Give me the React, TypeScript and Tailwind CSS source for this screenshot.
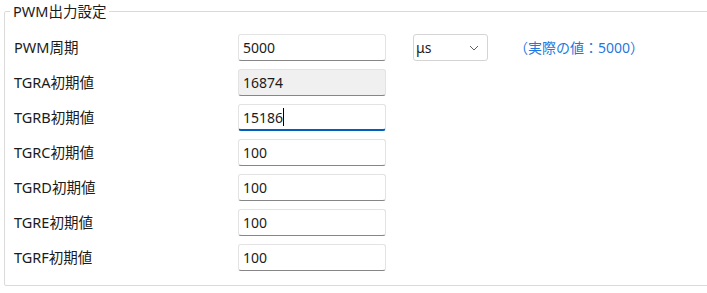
const rows = [
  { label: "TGRA初期値", value: "16874", disabled: true },
  { label: "TGRB初期値", value: "15186", focused: true },
  { label: "TGRC初期値", value: "100" },
  { label: "TGRD初期値", value: "100" },
  { label: "TGRE初期値", value: "100" },
  { label: "TGRF初期値", value: "100" },
];

function TextBox({
  value,
  disabled,
  focused,
}: {
  value: string;
  disabled?: boolean;
  focused?: boolean;
}) {
  return (
    <div
      className={`relative w-[148px] h-[27px] rounded-[3px] border border-[#e3e3e3] flex items-center pl-[4px] text-[14px] text-[#1b1b1b] ${
        disabled ? "bg-[#f0f0f0] border-b-[#8a8a8a]" : "bg-white"
      } ${focused ? "border-b-2 border-b-[#005fb8]" : "border-b-[#868686]"}`}
    >
      <span>{value}</span>
      {focused && <span className="w-px h-[18px] bg-black" />}
    </div>
  );
}

export default function App() {
  return (
    <div className="w-[707px] h-[293px] overflow-hidden bg-white text-[#1b1b1b] font-['Noto_Sans','Noto_Sans_CJK_JP',sans-serif]">
      <fieldset className="ml-[4px] mt-[3px] w-[720px] h-[283px] border border-[#dadada] rounded-[2px] pl-[9px] pt-[15px]">
        <legend className="-ml-[4px] px-[3px] text-[14.5px] leading-[16px]">PWM出力設定</legend>
        <div className="flex flex-col gap-[8px]">
          <div className="flex items-center h-[27px]">
            <div className="w-[224px] text-[14.5px]">PWM周期</div>
            <TextBox value="5000" />
            <div className="ml-[27px] w-[75px] h-[27px] rounded-[3px] border border-[#d4d4d4] bg-white flex items-center justify-between pl-[2px] pr-[8px] text-[14px]">
              <span>μs</span>
              <svg width="10" height="6" viewBox="0 0 10 6" fill="none">
                <path d="M1 1l4 4 4-4" stroke="#606060" strokeWidth="1" />
              </svg>
            </div>
            <div className="ml-[26px] text-[14px] text-[#1f78de]">（実際の値：5000）</div>
          </div>
          {rows.map((r) => (
            <div key={r.label} className="flex items-center h-[27px]">
              <div className="w-[224px] text-[14.5px]">{r.label}</div>
              <TextBox value={r.value} disabled={r.disabled} focused={r.focused} />
            </div>
          ))}
        </div>
      </fieldset>
    </div>
  );
}
